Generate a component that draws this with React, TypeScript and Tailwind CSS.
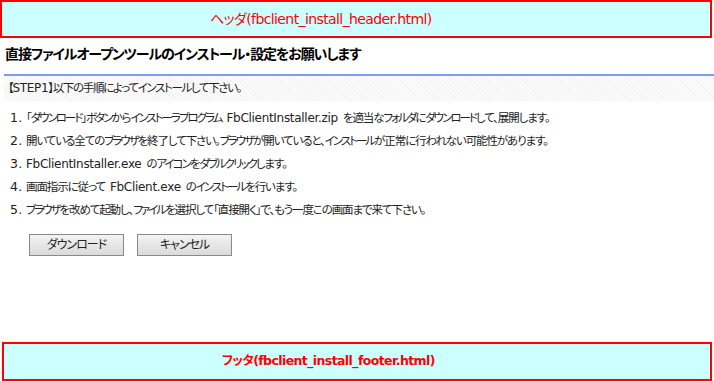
import React from 'react'

// latin bits in the steps use a different face than the japanese text
const L = ({ children }: { children: React.ReactNode }) => (
  <span className="text-[12px] leading-none tracking-[-0.3px] [font-feature-settings:normal]">{children}</span>
)

// word gap around latin words
const Sp = () => <span className="inline-block w-[5px]" />

// katakana runs are set tighter, like the narrow kana of the original UI font
const K = (text: string) =>
  text.split(/([\u30A0-\u30FF]+)/).map((part, i) =>
    /^[\u30A0-\u30FF]+$/.test(part) ? (
      <span key={i} className="tracking-[-2px]">{part}</span>
    ) : (
      <React.Fragment key={i}>{part}</React.Fragment>
    )
  )

const steps: React.ReactNode[] = [
  <>{K('「ダウンロード」ボタンからインストーラプログラム')}<Sp /><L>FbClientInstaller.zip</L><Sp />{K('を適当なフォルダにダウンロードして、展開します。')}</>,
  <>{K('開いている全てのブラウザを終了して下さい。ブラウザが開いていると、インストールが正常に行われない可能性があります。')}</>,
  <><L>FbClientInstaller.exe</L><Sp />{K('のアイコンをダブルクリックします。')}</>,
  <>{K('画面指示に従って')}<Sp /><L>FbClient.exe</L><Sp />{K('のインストールを行います。')}</>,
  <>{K('ブラウザを改めて起動し、ファイルを選択して「直接開く」で、もう一度この画面まで来て下さい。')}</>,
]

const App = () => {
  return (
    <div className="w-[714px] h-[381px] flex flex-col bg-white overflow-hidden font-['DejaVu_Sans','Noto_Sans_CJK_JP',sans-serif] text-[#222] [font-feature-settings:'palt']">
      {/* Header placeholder */}
      <div className="w-[712px] h-[38px] shrink-0 border-2 border-[#ff0000] bg-[#ccffff] flex items-center pl-[208px]">
        <span className="text-[14px] text-[#ff0000] tracking-[-0.6px]">ヘッダ(fbclient_install_header.html)</span>
      </div>

      <div className="flex-1">
        {/* Title */}
        <h1 className="mt-[5px] pl-[5px] h-[22px] text-[14px] font-bold leading-[22px] text-black tracking-[-1.1px]">
          直接ファイルオープンツールのインストール・設定をお願いします
        </h1>

        {/* Step bar */}
        <div className="mt-[9px] ml-[4px] border-t-2 border-[#7f9de8] h-[27px] flex items-center pl-[4px] bg-[repeating-linear-gradient(45deg,#f3f3f3_0px,#f3f3f3_1px,#fbfbfb_1px,#fbfbfb_3px)]">
          <span className="text-[11.5px] leading-none tracking-[-1.35px]">【<L>STEP1</L>】以下の手順によってインストールして下さい。</span>
        </div>

        {/* Steps */}
        <ol className="mt-[6px] pl-[10px] text-[11.5px] leading-[23px] tracking-[-1.1px]">
          {steps.map((s, i) => (
            <li key={i} className="flex h-[23px] items-center">
              <span className="w-[16px] shrink-0 text-[12.5px] leading-none tracking-[0.4px] [font-feature-settings:normal]">{i + 1}.</span>
              <span className="leading-none">{s}</span>
            </li>
          ))}
        </ol>

        {/* Buttons */}
        <div className="mt-[12px] pl-[29px] flex gap-[13px]">
          <button className="w-[95px] h-[22px] border border-[#8a8a8a] bg-gradient-to-b from-[#f3f3f3] to-[#dadada] text-[12px] tracking-[-1px] text-[#222]">
            ダウンロード
          </button>
          <button className="w-[95px] h-[22px] border border-[#8a8a8a] bg-gradient-to-b from-[#f3f3f3] to-[#dadada] text-[12px] tracking-[-1px] text-[#222]">
            キャンセル
          </button>
        </div>
      </div>

      {/* Footer placeholder */}
      <div className="ml-[2px] w-[710px] h-[39px] shrink-0 border-2 border-[#ff0000] bg-[#ccffff] flex items-center pl-[218px]">
        <span className="text-[12.5px] font-bold text-[#ff0000] tracking-[-0.6px]">フッタ(fbclient_install_footer.html)</span>
      </div>
    </div>
  )
}

export default App
